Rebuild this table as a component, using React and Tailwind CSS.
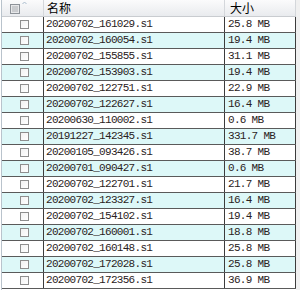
import React from 'react'

const rows = [
  ['20200702_161029.s1', '25.8 MB'],
  ['20200702_160054.s1', '19.4 MB'],
  ['20200702_155855.s1', '31.1 MB'],
  ['20200702_153903.s1', '19.4 MB'],
  ['20200702_122751.s1', '22.9 MB'],
  ['20200702_122627.s1', '16.4 MB'],
  ['20200630_110002.s1', '0.6 MB'],
  ['20191227_142345.s1', '331.7 MB'],
  ['20200105_093426.s1', '38.7 MB'],
  ['20200701_090427.s1', '0.6 MB'],
  ['20200702_122701.s1', '21.7 MB'],
  ['20200702_123327.s1', '16.4 MB'],
  ['20200702_154102.s1', '19.4 MB'],
  ['20200702_160001.s1', '18.8 MB'],
  ['20200702_160148.s1', '25.8 MB'],
  ['20200702_172028.s1', '25.8 MB'],
  ['20200702_172356.s1', '36.9 MB'],
]

const mono = { fontFamily: '"Liberation Mono", "DejaVu Sans Mono", monospace' }
const cjk = { fontFamily: '"Noto Sans CJK SC", "Noto Sans", sans-serif' }

const App = () => {
  return (
    <div className="w-[300px] h-[290px] overflow-hidden bg-white flex">
      <div className="w-px shrink-0 bg-white"></div>
      <div className="w-[295px] shrink-0 border-l border-[#b9c3cc] bg-white">
        {/* header */}
        <div className="flex h-[17px] border-b border-[#c9ccd0] bg-gradient-to-b from-[#fbfbfc] to-[#e9ebee]">
          <div className="w-[42px] shrink-0 border-r border-[#d4d7db] relative">
            <div className="absolute left-[8px] top-[4px] w-[10px] h-[10px] border border-[#8d9298] bg-[#c9cbce] shadow-[inset_0_0_0_1px_#e6e7e9]"></div>
            <svg className="absolute left-[20px] top-[1px]" width="5" height="4" viewBox="0 0 5 4">
              <path d="M0.5 3 L2.5 1 L4.5 3" fill="none" stroke="#a9bccd" strokeWidth="1" />
            </svg>
          </div>
          <div className="w-[181px] shrink-0 border-r border-[#d4d7db] pl-[3px] text-[12px] leading-[16px] text-black" style={cjk}>名称</div>
          <div className="w-[71px] shrink-0 border-r border-[#d4d7db] pl-[5px] text-[12px] leading-[16px] text-black" style={cjk}>大小</div>
        </div>
        {/* rows */}
        {rows.map((r, i) => (
          <div
            key={i}
            className={`flex h-[16px] border-b border-[#5a5a5a] ${i % 2 === 1 ? 'bg-[#ddf8f8]' : 'bg-white'}`}
          >
            <div className="w-[42px] shrink-0 border-r border-[#3c3c3c] pl-[18px] pt-[3px]">
              <div className="w-[9px] h-[9px] border border-[#8e8e8e] bg-gradient-to-br from-[#f2f2f2] to-white"></div>
            </div>
            <div className="w-[181px] shrink-0 border-r border-[#3c3c3c] pl-[2px] text-[11px] leading-[15px] tracking-[-0.7px] text-[#2a2222] whitespace-nowrap overflow-hidden" style={mono}>
              {r[0]}
            </div>
            <div className="w-[71px] shrink-0 border-r border-[#3c3c3c] pl-[3px] text-[11px] leading-[15px] tracking-[-0.7px] text-[#2a2222] whitespace-nowrap overflow-hidden" style={mono}>
              {r[1]}
            </div>
          </div>
        ))}
      </div>
      <div className="flex-1 bg-[#f0f0f0]"></div>
    </div>
  )
}

export default App
